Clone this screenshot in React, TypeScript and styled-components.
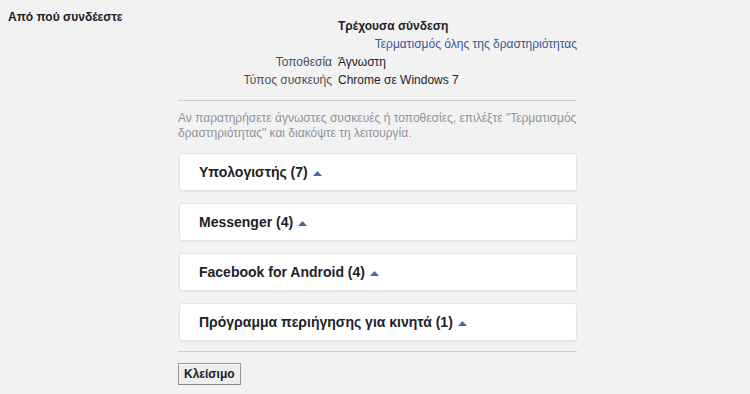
import styled, { createGlobalStyle } from 'styled-components';

const GlobalStyle = createGlobalStyle`
  body {
    margin: 0;
    background: #f2f2f2;
    font-family: "Liberation Sans", Arial, sans-serif;
    font-size: 12px;
    color: #1d2129;
  }
`;

const Page = styled.div`
  display: flex;
  padding: 9px 8px;
`;

const SideTitle = styled.h2`
  width: 170px;
  margin: 0;
  font-size: 12px;
  line-height: 16px;
  font-weight: bold;
  color: #1d2129;
`;

const Main = styled.div`
  width: 399px;
  padding-top: 9px;
`;

const InfoGrid = styled.div`
  display: grid;
  grid-template-columns: 154px 1fr;
  column-gap: 6px;
  row-gap: 2px;
  line-height: 16px;
`;

const Label = styled.div`
  text-align: right;
  color: #4b4f56;
`;

const Value = styled.div<{ $bold?: boolean; $right?: boolean }>`
  color: #1d2129;
  font-weight: ${(p) => (p.$bold ? 'bold' : 'normal')};
  text-align: ${(p) => (p.$right ? 'right' : 'left')};
`;

const Link = styled.a`
  color: #365899;
  text-decoration: none;
  cursor: pointer;
`;

const Divider = styled.hr<{ $top: number; $bottom: number }>`
  border: 0;
  border-top: 1px solid #ccd0d5;
  margin: ${(p) => p.$top}px 0 ${(p) => p.$bottom}px;
`;

const Help = styled.p`
  margin: 0 0 12px;
  color: #90949c;
  line-height: 15px;
`;

const CardList = styled.div`
  display: flex;
  flex-direction: column;
  gap: 12px;
  padding-left: 1px;
`;

const Card = styled.div`
  height: 36px;
  display: flex;
  align-items: center;
  padding-left: 19px;
  background: #fff;
  border: 1px solid #e3e4e7;
  border-radius: 3px;
  box-shadow: 0 1px 1px rgba(0, 0, 0, 0.06);
  font-size: 14px;
  font-weight: bold;
  color: #1d2129;
`;

const Caret = styled.svg`
  margin-left: 5px;
  margin-top: 3px;
`;

const CloseButton = styled.button`
  height: 22px;
  padding: 0 5px;
  font-family: "Liberation Sans", Arial, sans-serif;
  font-size: 12px;
  font-weight: bold;
  color: #1d2129;
  background: #eeeeee;
  border: 1px solid #999;
  border-bottom-color: #888;
  box-shadow: inset 0 1px 0 #fff;
  cursor: pointer;
`;

const groups = [
  { name: 'Υπολογιστής', count: 7 },
  { name: 'Messenger', count: 4 },
  { name: 'Facebook for Android', count: 4 },
  { name: 'Πρόγραμμα περιήγησης για κινητά', count: 1 },
];

export default function App() {
  return (
    <>
      <GlobalStyle />
      <Page>
        <SideTitle>Από πού συνδέεστε</SideTitle>
        <Main>
          <InfoGrid>
            <Label />
            <Value $bold>Τρέχουσα σύνδεση</Value>
            <Label />
            <Value $right>
              <Link>Τερματισμός όλης της δραστηριότητας</Link>
            </Value>
            <Label>Τοποθεσία</Label>
            <Value>Άγνωστη</Value>
            <Label>Τύπος συσκευής</Label>
            <Value>Chrome σε Windows 7</Value>
          </InfoGrid>
          <Divider $top={12} $bottom={10} />
          <Help>
            Αν παρατηρήσετε άγνωστες συσκευές ή τοποθεσίες, επιλέξτε "Τερματισμός δραστηριότητας" και
            διακόψτε τη λειτουργία.
          </Help>
          <CardList>
            {groups.map((g) => (
              <Card key={g.name}>
                {g.name} ({g.count})
                <Caret width="9" height="5" viewBox="0 0 9 5">
                  <path d="M0 5 L4.5 0 L9 5 Z" fill="#4b67a1" />
                </Caret>
              </Card>
            ))}
          </CardList>
          <Divider $top={10} $bottom={11} />
          <CloseButton>Κλείσιμο</CloseButton>
        </Main>
      </Page>
    </>
  );
}
